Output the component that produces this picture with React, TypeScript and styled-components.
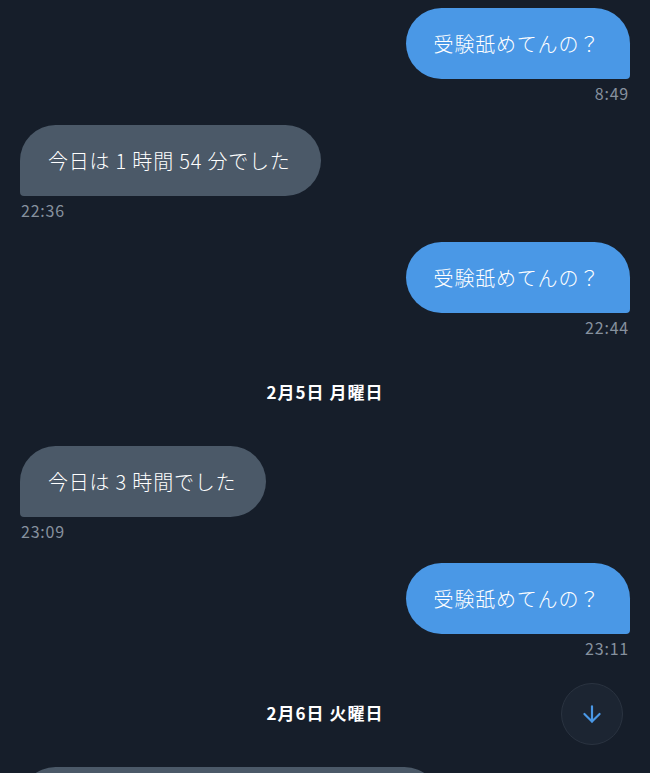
import React from "react";
import styled, { createGlobalStyle } from "styled-components";
import { ArrowDown } from "lucide-react";

const GlobalStyle = createGlobalStyle`
  html, body {
    margin: 0;
    padding: 0;
    background-color: #161e2a;
    font-family: "Noto Sans CJK JP", "Noto Sans", sans-serif;
    color: #ffffff;
  }
`;

type Side = "sent" | "received";

const Page = styled.div`
  height: 773px;
  overflow: hidden;
  box-sizing: border-box;
  padding: 8px 20px 0;
  display: flex;
  flex-direction: column;
  background-color: #161e2a;
`;

const Group = styled.div<{ $side: Side }>`
  display: flex;
  flex-direction: column;
  align-items: ${(p) => (p.$side === "sent" ? "flex-end" : "flex-start")};
  margin-bottom: 23px;
`;

const Bubble = styled.div<{ $side: Side; $width?: number }>`
  box-sizing: border-box;
  height: 71px;
  width: ${(p) => (p.$width ? `${p.$width}px` : "auto")};
  display: flex;
  align-items: center;
  padding: 0 30px 0 28px;
  font-size: 20px;
  font-weight: 300;
  letter-spacing: 0.8px;
  white-space: nowrap;
  background-color: ${(p) => (p.$side === "sent" ? "#4a98e6" : "#4b5968")};
  border-radius: ${(p) =>
    p.$side === "sent" ? "36px 36px 4px 36px" : "36px 36px 36px 4px"};
`;

const Time = styled.div<{ $side: Side }>`
  margin-top: 5px;
  font-size: 16px;
  line-height: 18px;
  letter-spacing: 0.8px;
  color: #86919e;
  padding: ${(p) => (p.$side === "sent" ? "0 1px 0 0" : "0 0 0 1px")};
`;

const DateLabel = styled.div`
  text-align: center;
  font-size: 17px;
  line-height: 20px;
  font-weight: 700;
  letter-spacing: 1px;
  margin: 23px 0 44px;
`;

const ScrollButton = styled.button`
  position: absolute;
  left: 561px;
  top: 683px;
  width: 62px;
  height: 62px;
  border-radius: 50%;
  border: 1px solid #2a3340;
  background-color: #1c2532;
  color: #4a98e6;
  display: flex;
  align-items: center;
  justify-content: center;
  padding: 0;
`;

type Item =
  | { kind: "msg"; side: Side; text: string; time?: string; width?: number }
  | { kind: "date"; text: string };

const messages: Item[] = [
  { kind: "msg", side: "sent", text: "受験舐めてんの？", time: "8:49" },
  { kind: "msg", side: "received", text: "今日は 1 時間 54 分でした", time: "22:36" },
  { kind: "msg", side: "sent", text: "受験舐めてんの？", time: "22:44" },
  { kind: "date", text: "2月5日 月曜日" },
  { kind: "msg", side: "received", text: "今日は 3 時間でした", time: "23:09" },
  { kind: "msg", side: "sent", text: "受験舐めてんの？", time: "23:11" },
  { kind: "date", text: "2月6日 火曜日" },
  // only the top edge of this bubble is on screen
  { kind: "msg", side: "received", text: "", width: 420 },
];

export default function App() {
  return (
    <>
      <GlobalStyle />
      <Page>
        {messages.map((m, i) =>
          m.kind === "date" ? (
            <DateLabel key={i}>{m.text}</DateLabel>
          ) : (
            <Group key={i} $side={m.side}>
              <Bubble $side={m.side} $width={m.width}>
                {m.text}
              </Bubble>
              {m.time && <Time $side={m.side}>{m.time}</Time>}
            </Group>
          )
        )}
      </Page>
      <ScrollButton aria-label="scroll down">
        <ArrowDown size={26} strokeWidth={2} />
      </ScrollButton>
    </>
  );
}
